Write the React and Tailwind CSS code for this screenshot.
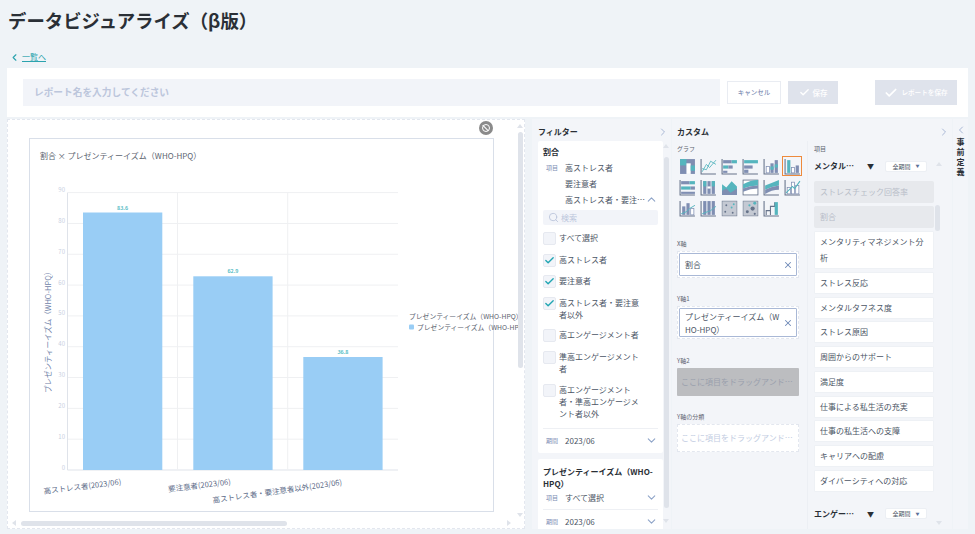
import React from "react";
import { Check, ChevronDown, ChevronLeft, ChevronRight, ChevronUp, Search, X } from "lucide-react";

const teal = "#55b5be";
const slate = "#7f8eb2";
const line = "#66738a";

// small chart-type icons, 16x16
const Axis = () => <path d="M1 1V15H15" fill="none" stroke={line} strokeWidth="1" />;

const chartIcons = [
  <>
    <rect x="1" y="1" width="14" height="14" fill={slate} />
    <rect x="1" y="1" width="6" height="6" fill={teal} />
    <rect x="7" y="5" width="4" height="10" fill="#fff" />
    <rect x="11" y="7" width="4" height="5" fill={teal} />
  </>,
  <>
    <Axis />
    <path d="M2 13L6 6L9 9L15 2M2 10L6 11L10 3L15 6" fill="none" stroke={teal} strokeWidth=".8" />
  </>,
  <>
    <Axis />
    <rect x="2" y="2" width="8" height="3" fill={slate} />
    <rect x="10" y="2" width="5" height="3" fill={teal} />
    <rect x="2" y="7" width="5" height="3" fill={teal} />
    <rect x="7" y="7" width="4" height="3" fill={slate} />
    <rect x="2" y="12" width="4" height="2" fill={slate} />
  </>,
  <>
    <Axis />
    <rect x="2" y="2" width="13" height="3" fill={teal} />
    <rect x="2" y="7" width="8" height="3" fill={slate} />
    <rect x="2" y="11" width="4" height="3" fill={slate} />
  </>,
  <>
    <Axis />
    <rect x="3" y="8" width="3" height="6" fill="#fff" stroke={slate} strokeWidth=".7" />
    <rect x="7" y="5" width="3" height="9" fill={slate} />
    <rect x="7" y="8" width="3" height="3" fill={teal} />
    <rect x="11" y="2" width="3" height="12" fill={slate} />
    <rect x="11" y="6" width="3" height="3" fill={teal} />
  </>,
  <>
    <Axis />
    <rect x="3" y="2" width="3" height="12" fill={teal} />
    <rect x="7" y="9" width="3" height="5" fill="#fff" stroke={slate} strokeWidth=".7" />
    <rect x="11" y="7" width="3" height="7" fill={slate} />
  </>,
  <>
    <Axis />
    <rect x="2" y="2" width="8" height="3" fill={slate} />
    <rect x="10" y="2" width="5" height="3" fill={teal} />
    <rect x="2" y="7" width="9" height="3" fill={teal} />
    <rect x="11" y="7" width="4" height="3" fill={slate} />
    <rect x="2" y="12" width="13" height="2" fill={slate} />
  </>,
  <>
    <Axis />
    <rect x="3" y="2" width="3" height="12" fill={slate} />
    <rect x="3" y="2" width="3" height="5" fill={teal} />
    <rect x="7" y="2" width="3" height="12" fill={slate} />
    <rect x="7" y="7" width="3" height="2" fill="#fff" />
    <rect x="11" y="2" width="3" height="12" fill={slate} />
    <rect x="11" y="2" width="3" height="5" fill={teal} />
  </>,
  <>
    <path d="M1 5L5 8L10 2L15 7V15H1Z" fill={teal} />
    <path d="M1 11L5 9L9 13L15 9V15H1Z" fill={slate} />
  </>,
  <>
    <rect x="1" y="1" width="14" height="14" fill="#fff" stroke={line} strokeWidth=".8" />
    <path d="M1 5Q8 1 15 1V6Q8 6 1 9Z" fill={teal} />
    <path d="M1 9Q8 6 15 6V9Q8 9 1 12Z" fill={slate} />
  </>,
  <>
    <Axis />
    <path d="M2 6Q8 4 15 1V6Q8 7 2 10Z" fill={teal} />
    <path d="M2 10Q8 7 15 6V10Q8 10 2 14Z" fill={slate} />
  </>,
  <>
    <Axis />
    <rect x="3" y="8" width="3" height="6" fill="#fff" stroke={slate} strokeWidth=".7" />
    <rect x="7" y="3" width="3" height="11" fill="#fff" stroke={slate} strokeWidth=".7" />
    <rect x="11" y="6" width="3" height="8" fill="#fff" stroke={slate} strokeWidth=".7" />
    <path d="M2 13L8 7L10 9L15 2" fill="none" stroke={teal} strokeWidth="1" />
  </>,
  <>
    <Axis />
    <rect x="3" y="6" width="3" height="8" fill={slate} />
    <rect x="7" y="3" width="3" height="11" fill={slate} />
    <rect x="11" y="8" width="3" height="6" fill="#fff" stroke={slate} strokeWidth=".7" />
    <path d="M2 13L7 11L10 8L15 5" fill="none" stroke={teal} strokeWidth=".9" />
  </>,
  <>
    <Axis />
    <rect x="3" y="1" width="3" height="13" fill={slate} />
    <rect x="7" y="1" width="3" height="13" fill={slate} />
    <rect x="11" y="1" width="3" height="13" fill={slate} />
    <path d="M2 13L7 11L10 10L15 6" fill="none" stroke={teal} strokeWidth=".9" />
  </>,
  <>
    <rect x="1" y="1" width="14" height="14" fill="#c4c9d3" stroke={line} strokeWidth=".5" />
    <circle cx="5" cy="5" r=".9" fill={line} />
    <circle cx="10" cy="7" r=".9" fill={teal} />
    <circle cx="4" cy="11" r=".9" fill={line} />
    <circle cx="12" cy="4" r=".9" fill={teal} />
    <circle cx="11" cy="12" r=".9" fill={line} />
  </>,
  <>
    <rect x="1" y="1" width="14" height="14" fill="#c4c9d3" stroke={line} strokeWidth=".5" />
    <circle cx="5" cy="11" r="1.4" fill={line} />
    <circle cx="10" cy="8" r="2" fill={line} />
    <circle cx="12" cy="3" r="1.4" fill={teal} />
    <circle cx="12" cy="13" r="1" fill={line} />
    <circle cx="7" cy="5" r="1" fill={teal} />
  </>,
  <>
    <Axis />
    <path d="M3 14V10H7V6H11V2" fill="none" stroke={line} strokeWidth="1" />
    <path d="M7 10V14" stroke={line} strokeWidth="1" />
    <rect x="11" y="2" width="3" height="12" fill={teal} />
  </>,
];

const ChartIcon = ({ active, children }) => (
  <div className={`w-[20px] h-[20px] flex items-center justify-center border ${active ? "border-[#ee8a3c]" : "border-transparent"}`}>
    <svg width="17" height="17" viewBox="0 0 16 16">{children}</svg>
  </div>
);

const CheckRow = ({ checked, children, className }) => (
  <div className={`flex gap-[3px] leading-[12.2px] ${className}`}>
    <span className="w-[13px] h-[13px] shrink-0 rounded-[2px] bg-[#f2f4f9] border border-[#e6e9f0] flex items-center justify-center">
      {checked && <Check size={11} strokeWidth={3} className="text-[#22a6b3]" />}
    </span>
    <span className="w-[84px]">{children}</span>
  </div>
);

const Field = ({ label, value, className, action }) => (
  <div className={`flex items-start ${className}`}>
    <span className="w-[18px] ml-[3px] text-[6px] leading-[12px] text-[#7d8db3]">{label}</span>
    <span className="ml-[1px] leading-[12px] flex-1 whitespace-nowrap">{value}</span>
    {action}
  </div>
);

const DropBox = ({ children, inner }) => (
  <div className="w-[122px] border border-dashed border-[#e3e7ef] bg-white p-[1px]">
    <div className={`border border-[#a9b8d6] rounded-[1px] bg-white pl-[5px] pr-[3px] flex items-center justify-between leading-[13px] text-[#4b5565] ${inner}`}>
      <span className="w-[100px] break-all">{children}</span>
      <X size={10} strokeWidth={2.5} className="text-[#6f8bb8] shrink-0" />
    </div>
  </div>
);

const itemRows = [
  "メンタリティマネジメント分析",
  "ストレス反応",
  "メンタルタフネス度",
  "ストレス原因",
  "周囲からのサポート",
  "満足度",
  "仕事による私生活の充実",
  "仕事の私生活への支障",
  "キャリアへの配慮",
  "ダイバーシティへの対応",
];

const PeriodPill = () => (
  <div className="w-[42px] h-[11px] rounded-[2px] bg-white border border-[#eceff4] flex items-center justify-center gap-[5px] text-[6px] text-[#4b5565]">
    全期間<span className="text-[4px] text-[#5d7199]">▼</span>
  </div>
);

const ScrollArrow = ({ up, className }) => (
  <span className={`w-0 h-0 border-x-[3px] border-x-transparent ${up ? "border-b-[4px] border-b-[#dfe3ea]" : "border-t-[4px] border-t-[#dfe3ea]"} ${className}`} />
);

const ticks = [0, 10, 20, 30, 40, 50, 60, 70, 80, 90];
const bars = [
  { x: 83, top: 212.5, label: "83.6" },
  { x: 193.3, top: 276.3, label: "62.9" },
  { x: 303.3, top: 357, label: "36.8" },
];

const Chart = () => (
  <svg
    className="absolute left-0 top-0 overflow-visible"
    width="463"
    height="372"
    viewBox="30 139 463 372"
    fontFamily="'Noto Sans CJK JP', sans-serif"
  >
    {ticks.map((t) => {
      const y = 470 - t * 3.082;
      return (
        <g key={t}>
          <line x1="67.5" x2="398" y1={y} y2={y} stroke={t === 0 ? "#dfe3ea" : "#eff0f2"} strokeWidth="1" />
          <text x="65" y={y - 0.5} textAnchor="end" fontSize="6" fill="#c8cfdf">{t}</text>
        </g>
      );
    })}
    <line x1="67.5" x2="67.5" y1="192.7" y2="470" stroke="#dfe3ea" />
    <line x1="177.5" x2="177.5" y1="192.7" y2="470" stroke="#eff0f2" />
    <line x1="287.7" x2="287.7" y1="192.7" y2="470" stroke="#eff0f2" />
    {bars.map((b) => (
      <g key={b.x}>
        <rect x={b.x} y={b.top} width="79.3" height={470 - b.top} fill="#99cdf5" />
        <text x={b.x + 39.6} y={b.top - 3} textAnchor="middle" fontSize="5.5" fontWeight="500" fill="#3fb4bd">{b.label}</text>
      </g>
    ))}
    <text transform="translate(51 393) rotate(-90)" fontSize="7.5" fill="#6f7fa8">プレゼンティーイズム（WHO-HPQ）</text>
    <g fontSize="7.5" fill="#5c6b88">
      <text transform="translate(44 494) rotate(-7)">高ストレス者(2023/06)</text>
      <text transform="translate(168.5 492) rotate(-7)">要注意者(2023/06)</text>
      <text transform="translate(213 503) rotate(-8)">高ストレス者・要注意者以外(2023/06)</text>
    </g>
    <g fontSize="6.8" fill="#5c6470">
      <text x="409" y="319">プレゼンティーイズム（WHO-HPQ）</text>
      <rect x="409" y="324.5" width="5" height="5" rx="1" fill="#99cdf5" />
      <text x="417" y="330">プレゼンティーイズム（WHO-HP</text>
    </g>
  </svg>
);

export default function App() {
  return (
    <div className="w-[975px] h-[534px] overflow-hidden bg-[#eff3f7] text-[8px] text-[#4b5565] font-['Noto_Sans_CJK_JP',sans-serif]">
      <h1 className="pl-2 pt-[7px] h-[38px] text-[18.4px] leading-[26px] font-bold text-[#2a2f36]">データビジュアライズ（β版）</h1>

      <div className="pl-[9px] mt-[11px] h-[19px] flex items-start gap-[2px] text-[#2ba3ae]">
        <ChevronLeft size={11} strokeWidth={2.5} className="mt-[3px]" />
        <a href="#" className="underline leading-[16px]">一覧へ</a>
      </div>

      {/* report name bar */}
      <div className="ml-[7px] w-[961px] h-[49px] bg-white flex items-center pl-4 pr-[11px]">
        <div className="w-[697px] h-[27px] bg-[#f2f4f9] flex items-center pl-[11px] text-[9.7px] font-bold text-[#bcc6dc]">
          レポート名を入力してください
        </div>
        <button className="ml-[7px] w-[54px] h-[23px] bg-white border border-[#e9ecf2] text-[6.5px] text-[#7d8db3] font-medium">キャンセル</button>
        <button className="ml-[7px] w-[50px] h-[23px] bg-[#dfe3ec] text-[7.5px] text-white font-medium flex items-center justify-center gap-[3px]">
          <Check size={11} strokeWidth={3} />保存
        </button>
        <button className="ml-[37px] w-[82px] h-[25px] bg-[#dfe3ec] text-[6.6px] text-white font-medium flex items-center justify-center gap-[3px]">
          <Check size={14} strokeWidth={3} />レポートを保存
        </button>
      </div>

      <div className="ml-[7px] mt-[2px] w-[961px] h-[410px] flex">
        {/* chart area */}
        <div className="relative w-[518px] shrink-0 bg-white border border-dashed border-[#e3e7ef] pl-[21px] pt-[18px]">
          <div className="relative w-[465px] h-[374px] border border-[#d9dfe9]">
            <span className="absolute left-[10px] top-[11px] text-[#5c6470]">割合 × プレゼンティーイズム（WHO-HPQ）</span>
            <Chart />
          </div>
          <span className="absolute right-[31px] top-[1px] w-[14px] h-[14px] rounded-full bg-[#8a8a8a] flex items-center justify-center">
            <span className="block w-[8px] h-[8px] rounded-full border border-white relative">
              <span className="absolute left-[2px] top-[-1px] w-px h-[8px] bg-white -rotate-45" />
            </span>
          </span>
          <ScrollArrow up className="absolute right-[1px] top-[4px]" />
          <span className="absolute right-[1px] top-[12px] w-[5px] h-[236px] rounded-full bg-[#dfe3ea]" />
          <ScrollArrow className="absolute right-[1px] bottom-[11px]" />
          <span className="absolute left-[13px] bottom-[2px] w-[266px] h-[5px] rounded-full bg-[#dfe3ea]" />
          <span className="absolute left-[4px] bottom-[2px] w-0 h-0 border-y-[3px] border-y-transparent border-r-[4px] border-r-[#dfe3ea]" />
          <span className="absolute right-[13px] bottom-[2px] w-0 h-0 border-y-[3px] border-y-transparent border-l-[4px] border-l-[#dfe3ea]" />
        </div>

        {/* filter panel */}
        <div className="relative ml-[7px] w-[139px] shrink-0 bg-[#f3f5f9] overflow-hidden px-[6px]">
          <div className="h-[22px] pt-[3px] flex items-center justify-between font-bold text-[#2a2f36]">
            フィルター
            <ChevronRight size={12} className="text-[#a9b8d6] -mr-[4px]" />
          </div>
          <div className="w-[125px] h-[312px] bg-white rounded-[2px] px-[5px] pt-[5px]">
            <div className="font-bold leading-[12px] text-[#2a2f36]">割合</div>
            <Field label="項目" value="高ストレス者" className="mt-[4px]" />
            <Field label="" value="要注意者" className="mt-[4px]" />
            <Field
              label=""
              value="高ストレス者・要注…"
              className="mt-[4px]"
              action={<ChevronUp size={13} className="text-[#8ea4c8] -my-px" />}
            />
            <div className="mt-[4px] h-[15px] bg-[#f2f4f9] rounded-[2px] flex items-center gap-[2px] pl-[5px] text-[#bcc6dc]">
              <Search size={11} />検索
            </div>
            <CheckRow className="mt-[7px]">すべて選択</CheckRow>
            <CheckRow checked className="mt-[8.5px]">高ストレス者</CheckRow>
            <CheckRow checked className="mt-[8.5px]">要注意者</CheckRow>
            <CheckRow checked className="mt-[8.5px]">高ストレス者・要注意者以外</CheckRow>
            <CheckRow className="mt-[8.5px]">高エンゲージメント者</CheckRow>
            <CheckRow className="mt-[8.5px]">準高エンゲージメント者</CheckRow>
            <CheckRow className="mt-[8.5px]">高エンゲージメント者・準高エンゲージメント者以外</CheckRow>
            <div className="mt-[8px] border-t border-[#eef0f4] pt-[6px]">
              <Field
                label="期間"
                value="2023/06"
                action={<ChevronDown size={13} className="text-[#8ea4c8] -my-px" />}
              />
            </div>
          </div>
          <div className="mt-[6px] w-[125px] h-[90px] bg-white rounded-[2px] px-[5px] pt-[7px]">
            <div className="font-bold leading-[12px] text-[#2a2f36]">プレゼンティーイズム（WHO-HPQ）</div>
            <Field
              label="項目"
              value="すべて選択"
              className="mt-[2px]"
              action={<ChevronDown size={13} className="text-[#8ea4c8] -my-px" />}
            />
            <div className="mt-[5px] border-t border-[#eef0f4] pt-[6px]">
              <Field
                label="期間"
                value="2023/06"
                action={<ChevronDown size={13} className="text-[#8ea4c8] -my-px" />}
              />
            </div>
          </div>
          <ScrollArrow up className="absolute right-[2px] top-[25px]" />
          <span className="absolute right-[2px] top-[38px] w-[5px] h-[351px] rounded-full bg-[#dfe3ea]" />
          <ScrollArrow className="absolute right-[2px] bottom-[6px]" />
        </div>

        {/* custom panel */}
        <div className="ml-px w-[280px] shrink-0 bg-[#f3f5f9] pl-[5px]">
          <div className="h-[22px] pt-[3px] flex items-center justify-between pr-[5px] font-bold text-[#2a2f36]">
            カスタム
            <ChevronRight size={12} className="text-[#a9b8d6] -mr-[3px]" />
          </div>
          <div className="flex">
            <div className="w-[131px] shrink-0 border-r border-[#eceff4] pt-[2px]">
              <div className="text-[6px] leading-[12px] text-[#5c6470]">グラフ</div>
              <div className="mt-[1px] grid grid-cols-[repeat(6,21px)] gap-y-px w-[126px]">
                {chartIcons.map((icon, i) => (
                  <ChartIcon key={i} active={i === 5}>{icon}</ChartIcon>
                ))}
              </div>
              <div className="mt-[20px] text-[6px] leading-[12px] text-[#5c6470]">X軸</div>
              <div className="mt-[1px]"><DropBox inner="h-[23px]">割合</DropBox></div>
              <div className="mt-[15px] text-[6px] leading-[12px] text-[#5c6470]">Y軸1</div>
              <div className="mt-[1px]">
                <DropBox inner="h-[29px]">プレゼンティーイズム（WHO-HPQ）</DropBox>
              </div>
              <div className="mt-[16px] text-[6px] leading-[12px] text-[#5c6470]">Y軸2</div>
              <div className="mt-[1px] w-[122px] h-[28px] rounded-[1px] bg-[#bcbdc0] flex items-center pl-[4px] text-[#9aa0ad] whitespace-nowrap">
                ここに項目をドラッグアンド…
              </div>
              <div className="mt-[15px] text-[6px] leading-[12px] text-[#5c6470]">Y軸の分類</div>
              <div className="mt-[1px] w-[122px] h-[28px] border border-dashed border-[#e3e7ef] bg-white flex items-center pl-[3px] text-[#c3cde2] whitespace-nowrap">
                ここに項目をドラッグアンド…
              </div>
            </div>

            <div className="relative flex-1 pl-[6px] pt-[2px] h-[388px] overflow-hidden">
              <div className="text-[6px] leading-[12px] text-[#5c6470]">項目</div>
              <div className="mt-[4px] flex items-center h-[14px]">
                <span className="w-[53px] font-bold text-[#2a2f36]">メンタル…</span>
                <span className="w-[18px] text-[7px] text-[#2a2f36]">▼</span>
                <PeriodPill />
              </div>
              <div className="mt-[8px] w-[120px] h-[22px] rounded-[2px] bg-[#e7e9ed] flex items-center pl-[6px] text-[#b8bdc8]">ストレスチェック回答率</div>
              <div className="mt-[3px] w-[120px] h-[22px] rounded-[2px] bg-[#e7e9ed] flex items-center pl-[6px] text-[#b8bdc8]">割合</div>
              <div className="mt-[3px] w-[120px] flex flex-col gap-[2.75px]">
                {itemRows.map((r) => (
                  <div key={r} className="bg-white rounded-[1px] border border-[#eef1f5] px-[5px] py-[2px] leading-[16px] text-[#4b5565]">{r}</div>
                ))}
              </div>
              <div className="mt-[16px] flex items-center h-[12px]">
                <span className="w-[53px] font-bold text-[#2a2f36]">エンゲー…</span>
                <span className="w-[18px] text-[7px] text-[#2a2f36]">▼</span>
                <PeriodPill />
              </div>
              <ScrollArrow up className="absolute left-[128px] top-[21px]" />
              <span className="absolute left-[127px] top-[64px] w-[5px] h-[26px] rounded-full bg-[#dfe3ea]" />
              <ScrollArrow className="absolute left-[128px] bottom-[4px]" />
            </div>
          </div>
        </div>

        {/* predefined strip */}
        <div className="ml-px flex-1 bg-[#f3f5f9] flex flex-col items-center">
          <ChevronLeft size={12} className="mt-[5px] text-[#a9b8d6]" />
          <div className="mt-[1px] w-[8px] leading-[10px] font-bold text-[#2a2f36]">事前定義</div>
        </div>
      </div>
    </div>
  );
}
